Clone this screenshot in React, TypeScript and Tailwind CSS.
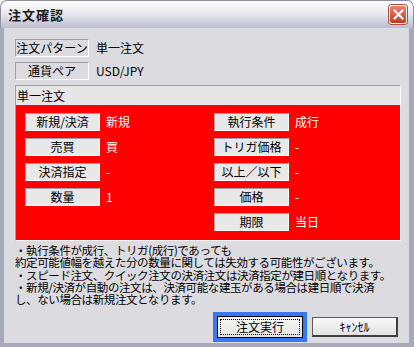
import React from 'react';

const Label: React.FC<{ children: React.ReactNode }> = ({ children }) => (
  <div className="w-[75px] h-[18px] shrink-0 bg-[#e8e8e8] border-t border-l border-[#a0a0a0] border-r border-r-white border-b border-b-white flex items-center justify-center leading-none">
    {children}
  </div>
);

const Row: React.FC<{ label: string; value: string }> = ({ label, value }) => (
  <div className="flex items-center h-[18px]">
    <Label>{label}</Label>
    <span className="ml-[6px] text-white leading-none">{value}</span>
  </div>
);

const App: React.FC = () => {
  return (
    <div className="w-[414px] h-[347px] flex flex-col bg-white text-[12px] text-black font-['Noto_Sans_CJK_JP','Noto_Sans',sans-serif]">
      {/* title bar */}
      <div className="h-[28px] shrink-0 rounded-t-[7px] border border-b-0 border-[#8e8ea6] bg-gradient-to-b from-[#ffffff] via-[#e6e6ec] to-[#bdbdcc] flex items-center justify-between pl-[7px] pr-[6px]">
        <span className="font-bold text-[13px] text-[#1c1c1c] tracking-[1px]">注文確認</span>
        <div className="w-[18px] h-[19px] rounded-[3px] border border-white bg-gradient-to-b from-[#e8846c] to-[#c4381c] flex items-center justify-center shadow-[0_0_0_1px_#b0503c]">
          <svg width="11" height="11" viewBox="0 0 11 11">
            <path d="M1.5 1.5 L9.5 9.5 M9.5 1.5 L1.5 9.5" stroke="white" strokeWidth="2.2" strokeLinecap="square" />
          </svg>
        </div>
      </div>

      {/* body */}
      <div className="flex-1 flex flex-col bg-[#dcdce0] border-l-4 border-r-[5px] border-b-4 border-[#a9a9bd] pl-[11px] pr-[8px] pt-[11px]">
        <div className="flex items-center h-[18px]">
          <div className="w-[74px] h-[18px] border-t border-l border-[#a0a0a0] border-r border-r-white border-b border-b-white flex items-center justify-center leading-none">
            注文パターン
          </div>
          <span className="ml-[7px] leading-none">単一注文</span>
        </div>
        <div className="flex items-center h-[18px] mt-[5px]">
          <div className="w-[74px] h-[18px] border-t border-l border-[#a0a0a0] border-r border-r-white border-b border-b-white flex items-center justify-center leading-none">
            通貨ペア
          </div>
          <span className="ml-[7px] leading-none">USD/JPY</span>
        </div>

        {/* group */}
        <div className="mt-[5px] border-t border-l border-[#a0a0a0] border-r border-r-white border-b border-b-white">
          <div className="h-[19px] bg-[#e6e6e6] pl-[1px] flex items-center leading-none">単一注文</div>
          <div className="bg-[#ff0000] flex pt-[8px] pb-[9px] pl-[9px]">
            <div className="w-[189px] flex flex-col gap-[7px]">
              <Row label="新規/決済" value="新規" />
              <Row label="売買" value="買" />
              <Row label="決済指定" value="-" />
              <Row label="数量" value="1" />
            </div>
            <div className="flex flex-col gap-[7px]">
              <Row label="執行条件" value="成行" />
              <Row label="トリガ価格" value="-" />
              <Row label="以上／以下" value="-" />
              <Row label="価格" value="-" />
              <Row label="期限" value="当日" />
            </div>
          </div>
        </div>

        {/* notes */}
        <div className="mt-[3px] text-[11.5px] tracking-[-0.4px] leading-[12.25px] whitespace-nowrap">
          <div>・執行条件が成行、トリガ(成行)であっても</div>
          <div>約定可能値幅を越えた分の数量に関しては失効する可能性がございます。</div>
          <div>・スピード注文、クイック注文の決済注文は決済指定が建日順となります。</div>
          <div>・新規/決済が自動の注文は、決済可能な建玉がある場合は建日順で決済</div>
          <div>し、ない場合は新規注文となります。</div>
        </div>

        {/* buttons */}
        <div className="mt-auto mb-[1px] flex items-center justify-end gap-[5px] pr-[3px]">
          <div className="border-4 border-[#3a78f2]">
            <button className="w-[86px] h-[22px] border border-black bg-gradient-to-b from-[#fafafa] to-[#e2e2e2] p-[2px] flex">
              <span className="flex-1 border border-dotted border-black flex items-center justify-center leading-none">
                注文実行
              </span>
            </button>
          </div>
          <button className="w-[86px] h-[20px] border border-[#5a5a5a] border-r-2 border-b-2 border-r-[#404040] border-b-[#404040] bg-gradient-to-b from-[#fafafa] to-[#e2e2e2] flex items-center justify-center leading-none">
            ｷｬﾝｾﾙ
          </button>
        </div>
      </div>
    </div>
  );
};

export default App;
